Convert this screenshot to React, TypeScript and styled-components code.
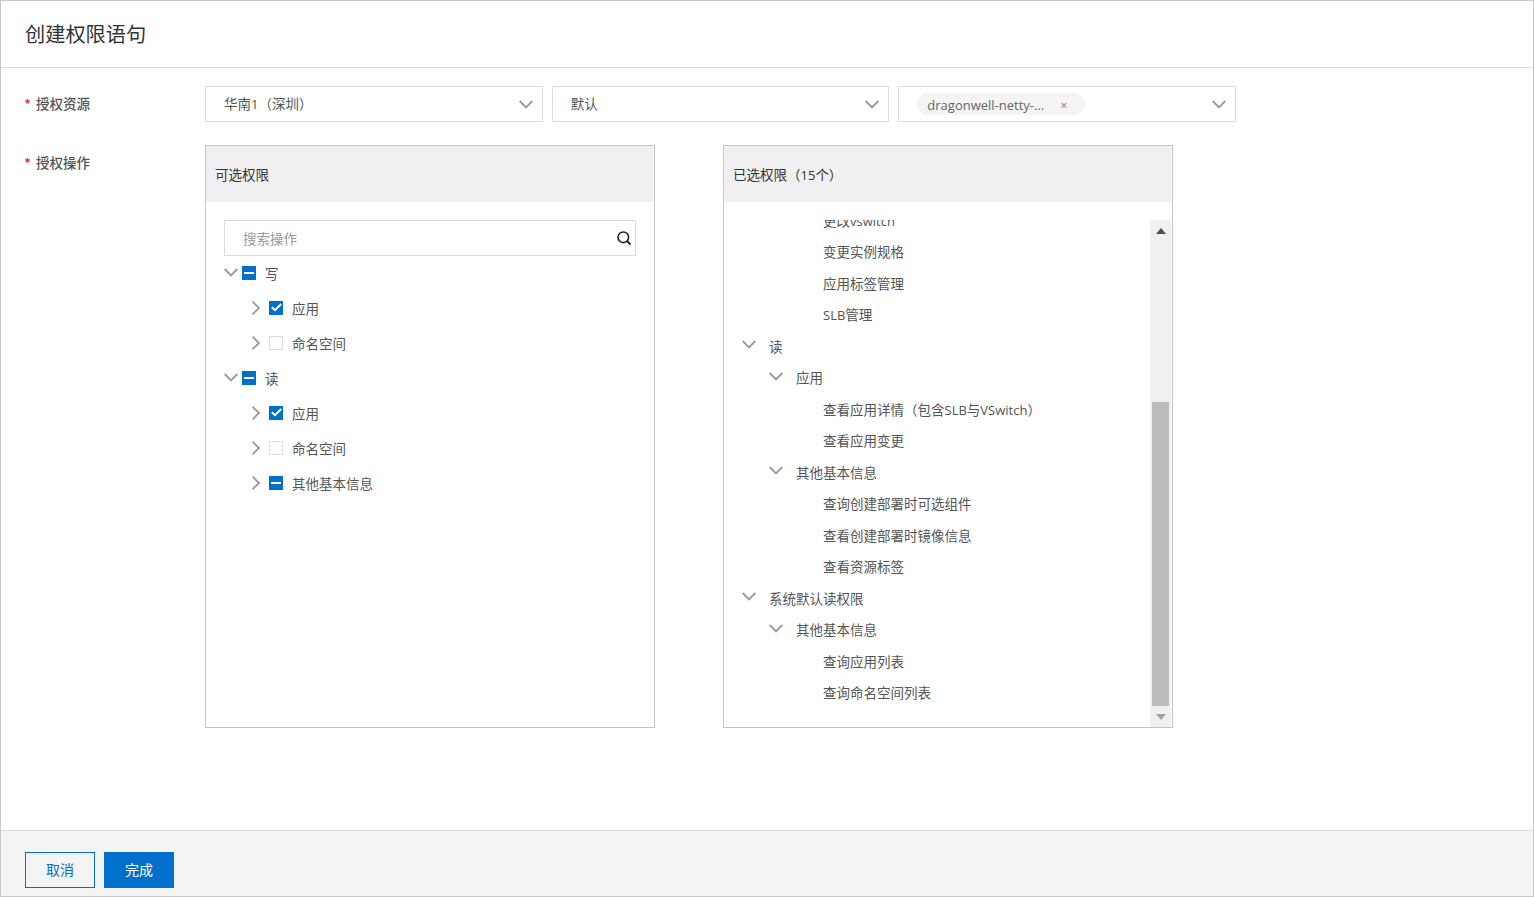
import React from 'react';
import styled, { createGlobalStyle } from 'styled-components';

const FONT = `"Open Sans", "Noto Sans CJK SC", sans-serif`;

const Global = createGlobalStyle`
  * { box-sizing: border-box; }
  html, body { margin: 0; padding: 0; background: #fff; }
  body { font-family: ${FONT}; font-size: 13.5px; color: #555; }
`;

const Page = styled.div`
  width: 1534px;
  height: 897px;
  border: 1px solid #c8c8c8;
  display: flex;
  flex-direction: column;
  overflow: hidden;
`;
const Header = styled.header`
  height: 67px;
  flex: none;
  padding: 0 0 2px 24px;
  border-bottom: 1px solid #dcdcdc;
  display: flex;
  align-items: center;
`;
const Title = styled.h1`
  margin: 0;
  font-size: 20.2px;
  font-weight: 400;
  color: #333;
`;
const Body = styled.main`
  flex: 1;
  padding: 18px 24px 0;
  display: flex;
  flex-direction: column;
  gap: 23px;
`;
const FormRow = styled.div`
  display: grid;
  grid-template-columns: 180px 1fr;
`;
const Label = styled.label`
  height: 36px;
  padding-bottom: 2px;
  display: flex;
  align-items: center;
  gap: 5px;
  font-size: 13.5px;
  font-weight: 500;
  color: #555;
`;
const Star = styled.span`
  color: #e0352b;
  font-size: 13px;
  font-family: "Liberation Sans", sans-serif;
  font-weight: 700;
  width: 6px;
`;
const Selects = styled.div`
  width: 1031px;
  display: grid;
  grid-template-columns: repeat(3, 1fr);
  gap: 9px;
`;
const Select = styled.div`
  height: 36px;
  border: 1px solid #dcdcdc;
  padding: 0 9px 0 18px;
  display: flex;
  align-items: center;
  justify-content: space-between;
`;
const SelectValue = styled.span`
  color: #555;
  margin-bottom: 2px;
`;
const Tag = styled.span`
  width: 168px;
  height: 22px;
  border-radius: 11px;
  background: #f4f4f4;
  padding: 2px 18px 0 10px;
  display: flex;
  align-items: center;
  justify-content: space-between;
  font-size: 13px;
  color: #666;
`;
const TagClose = styled.span`
  font-size: 12px;
  color: #777;
`;
const Panels = styled.div`
  display: flex;
  gap: 68px;
`;
const Panel = styled.section`
  width: 450px;
  height: 583px;
  border: 1px solid #c4c4c4;
  display: flex;
  flex-direction: column;
`;
const PanelHead = styled.div`
  height: 56px;
  flex: none;
  margin-right: 1px;
  padding-left: 9px;
  background: #f0f0f0;
  display: flex;
  align-items: center;
  color: #333;
`;
const LeftBody = styled.div`
  flex: 1;
  padding: 18px 18px 0;
`;
const Search = styled.div`
  height: 36px;
  border: 1px solid #dcdcdc;
  padding: 0 3px 0 18px;
  display: flex;
  align-items: center;
  justify-content: space-between;
  color: #999;
`;
const TreeRow = styled.div<{ $level: number }>`
  height: 35px;
  padding-left: ${p => p.$level * 27}px;
  padding-bottom: 2px;
  display: flex;
  align-items: center;
  color: #555;
`;
const ArrowSlot = styled.span`
  width: 18px;
  flex: none;
  display: flex;
`;
const Box = styled.span<{ $state: 'none' | 'all' | 'part' }>`
  width: 14px;
  height: 14px;
  flex: none;
  margin-right: 9px;
  background: ${p => (p.$state === 'none' ? '#fff' : '#0070cc')};
  border: ${p => (p.$state === 'none' ? '1px solid #dcdcdc' : 'none')};
  display: flex;
  align-items: center;
  justify-content: center;
`;
const RightBody = styled.div`
  flex: 1;
  min-height: 0;
  padding-top: 18px;
  display: flex;
`;
const Viewport = styled.div`
  flex: 1;
  min-width: 0;
  overflow: hidden;
`;
const List = styled.div`
  margin-top: -16px;
  padding-left: 18px;
`;
const ListRow = styled.div<{ $level: number }>`
  height: 31.5px;
  padding-left: ${p => p.$level * 27}px;
  display: flex;
  align-items: center;
  color: #555;
`;
const ListArrow = styled.span`
  width: 27px;
  flex: none;
  display: flex;
  margin-bottom: 2px;
`;
const Latin = styled.span`
  font-size: 13px;
`;
const Scrollbar = styled.div`
  width: 21px;
  flex: none;
  margin-right: 1px;
  background: #f0f0f0;
  display: flex;
  flex-direction: column;
  align-items: center;
`;
const ScrollBtn = styled.div<{ $h: number }>`
  height: ${p => p.$h}px;
  flex: none;
  display: flex;
  align-items: center;
  justify-content: center;
`;
const Thumb = styled.div`
  width: 17px;
  height: 304px;
  flex: none;
  margin-top: 160px;
  background: #bcbcbc;
`;
const Footer = styled.footer`
  height: 66px;
  flex: none;
  border-top: 1px solid #dcdcdc;
  background: #f4f4f4;
  padding: 21px 24px 0;
  display: flex;
  align-items: flex-start;
  gap: 9px;
`;
const Button = styled.button<{ $primary?: boolean }>`
  width: 70px;
  height: 36px;
  padding: 0 0 2px;
  border: 1px solid #0070cc;
  border-radius: 0;
  background: ${p => (p.$primary ? '#0070cc' : 'transparent')};
  color: ${p => (p.$primary ? '#fff' : '#0070cc')};
  font-family: ${FONT};
  font-size: 14px;
`;

const Down = () => (
  <svg width="14" height="9" viewBox="0 0 14 9" fill="none">
    <path d="M0.7 1 L7 7.5 L13.3 1" stroke="#999" strokeWidth="1.8" />
  </svg>
);
const Right = () => (
  <svg width="10" height="14" viewBox="0 0 10 14" fill="none">
    <path d="M1.5 0.7 L8 7 L1.5 13.3" stroke="#999" strokeWidth="1.8" />
  </svg>
);
const Mark = ({ state }: { state: 'none' | 'all' | 'part' }) => (
  <Box $state={state}>
    {state === 'part' && (
      <svg width="10" height="2" viewBox="0 0 10 2"><rect width="10" height="2" fill="#fff" /></svg>
    )}
    {state === 'all' && (
      <svg width="11" height="9" viewBox="0 0 11 9" fill="none">
        <path d="M0.8 4.2 L4 7.2 L10.2 1" stroke="#fff" strokeWidth="2" />
      </svg>
    )}
  </Box>
);
const Mixed = ({ text }: { text: string }) => (
  <span>
    {text.split(/([A-Za-z0-9]+)/).map((part, i) =>
      i % 2 ? <Latin key={i}>{part}</Latin> : part
    )}
  </span>
);

const tree: { level: number; text: string; open?: boolean; state: 'none' | 'all' | 'part' }[] = [
  { level: 0, text: '写', open: true, state: 'part' },
  { level: 1, text: '应用', state: 'all' },
  { level: 1, text: '命名空间', state: 'none' },
  { level: 0, text: '读', open: true, state: 'part' },
  { level: 1, text: '应用', state: 'all' },
  { level: 1, text: '命名空间', state: 'none' },
  { level: 1, text: '其他基本信息', state: 'part' },
];

const selected: { level: number; text: string; arrow?: boolean }[] = [
  { level: 2, text: '更改vswitch' },
  { level: 2, text: '变更实例规格' },
  { level: 2, text: '应用标签管理' },
  { level: 2, text: 'SLB管理' },
  { level: 0, text: '读', arrow: true },
  { level: 1, text: '应用', arrow: true },
  { level: 2, text: '查看应用详情（包含SLB与VSwitch）' },
  { level: 2, text: '查看应用变更' },
  { level: 1, text: '其他基本信息', arrow: true },
  { level: 2, text: '查询创建部署时可选组件' },
  { level: 2, text: '查看创建部署时镜像信息' },
  { level: 2, text: '查看资源标签' },
  { level: 0, text: '系统默认读权限', arrow: true },
  { level: 1, text: '其他基本信息', arrow: true },
  { level: 2, text: '查询应用列表' },
  { level: 2, text: '查询命名空间列表' },
];

export default function App() {
  return (
    <Page>
      <Global />
      <Header>
        <Title>创建权限语句</Title>
      </Header>
      <Body>
        <FormRow>
          <Label><Star>*</Star>授权资源</Label>
          <Selects>
            <Select><SelectValue><Mixed text="华南1（深圳）" /></SelectValue><Down /></Select>
            <Select><SelectValue>默认</SelectValue><Down /></Select>
            <Select>
              <Tag>dragonwell-netty-...<TagClose>×</TagClose></Tag>
              <Down />
            </Select>
          </Selects>
        </FormRow>
        <FormRow>
          <Label><Star>*</Star>授权操作</Label>
          <Panels>
            <Panel>
              <PanelHead>可选权限</PanelHead>
              <LeftBody>
                <Search>
                  搜索操作
                  <svg width="16" height="16" viewBox="0 0 16 16" fill="none">
                    <circle cx="7.3" cy="7.3" r="5.3" stroke="#222" strokeWidth="1.6" />
                    <path d="M11 11 L14.5 14.5" stroke="#222" strokeWidth="1.8" />
                  </svg>
                </Search>
                {tree.map((r, i) => (
                  <TreeRow key={i} $level={r.level}>
                    <ArrowSlot>{r.open ? <Down /> : <Right />}</ArrowSlot>
                    <Mark state={r.state} />
                    {r.text}
                  </TreeRow>
                ))}
              </LeftBody>
            </Panel>
            <Panel>
              <PanelHead><Mixed text="已选权限（15个）" /></PanelHead>
              <RightBody>
                <Viewport>
                  <List>
                    {selected.map((r, i) => (
                      <ListRow key={i} $level={r.level}>
                        <ListArrow>{r.arrow && <Down />}</ListArrow>
                        <Mixed text={r.text} />
                      </ListRow>
                    ))}
                  </List>
                </Viewport>
                <Scrollbar>
                  <ScrollBtn $h={22}>
                    <svg width="10" height="6" viewBox="0 0 10 6"><path d="M5 0 L10 6 H0 Z" fill="#505050" /></svg>
                  </ScrollBtn>
                  <Thumb />
                  <ScrollBtn $h={21}>
                    <svg width="10" height="6" viewBox="0 0 10 6"><path d="M0 0 H10 L5 6 Z" fill="#a3a3a3" /></svg>
                  </ScrollBtn>
                </Scrollbar>
              </RightBody>
            </Panel>
          </Panels>
        </FormRow>
      </Body>
      <Footer>
        <Button>取消</Button>
        <Button $primary>完成</Button>
      </Footer>
    </Page>
  );
}
